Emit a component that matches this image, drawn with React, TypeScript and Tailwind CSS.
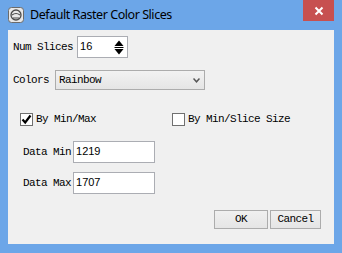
import React from "react";

const mono = "font-['Liberation_Mono',monospace] text-[11px] tracking-[-0.6px] text-black";

function TitleIcon() {
  return (
    <svg width="16" height="16" viewBox="0 0 16 16">
      <rect x="0.5" y="0.5" width="15" height="15" rx="3" fill="#e8e8e8" stroke="#6b6b6b" />
      <circle cx="8" cy="8" r="5" fill="none" stroke="#4a4a4a" strokeWidth="1.3" />
      <path d="M4 8 Q8 5 12 8" fill="none" stroke="#4a4a4a" strokeWidth="1.1" />
      <path d="M5 11 L11 11" stroke="#4a4a4a" strokeWidth="1" />
    </svg>
  );
}

function Spinner() {
  return (
    <svg width="10" height="15" viewBox="0 0 10 15">
      <path d="M5 0.5 L9.5 6 L0.5 6 Z" fill="#000" />
      <rect x="0.5" y="7" width="9" height="1" fill="#000" />
      <path d="M0.5 9 L9.5 9 L5 14.5 Z" fill="#000" />
    </svg>
  );
}

function Checkbox({ checked }: { checked?: boolean }) {
  return (
    <div className="w-[13px] h-[13px] border border-[#707070] bg-white flex items-center justify-center">
      {checked && (
        <svg width="11" height="11" viewBox="0 0 11 11">
          <path d="M1.5 5.5 L4.2 8.5 L9.5 1.5" fill="none" stroke="#000" strokeWidth="2.2" />
        </svg>
      )}
    </div>
  );
}

export default function App() {
  return (
    <div className="w-[342px] h-[253px] bg-[#6ca6e8] flex flex-col">
      <div className="h-[30px] flex items-start shrink-0">
        <div className="ml-[8px] mt-[7px]">
          <TitleIcon />
        </div>
        <span className="ml-[6px] mt-[5px] font-['Noto_Sans',sans-serif] text-[12.5px] tracking-[-0.45px] text-black leading-[20px]">
          Default Raster Color Slices
        </span>
        <div className="ml-auto mr-[8px] w-[31px] h-[21px] bg-[#c75050] flex items-center justify-center">
          <svg width="10" height="10" viewBox="0 0 10 10">
            <path d="M1.5 1.5 L8.5 8.5 M8.5 1.5 L1.5 8.5" stroke="#fff" strokeWidth="2" />
          </svg>
        </div>
      </div>
      <div className="mx-[8px] mb-[9px] flex-1 bg-[#f0f0f0] flex flex-col pl-[5px]">
        <div className="mt-[6px] flex items-center h-[22px]">
          <span className={mono}>Num Slices</span>
          <div className="ml-[4px] w-[51px] h-[22px] bg-white border border-[#abadb3] flex items-start">
            <span className="ml-[2px] mt-[2px] font-['Liberation_Sans',sans-serif] text-[11px] leading-[14px]">16</span>
            <div className="ml-auto mr-[3px] mt-[3px]">
              <Spinner />
            </div>
          </div>
        </div>
        <div className="mt-[12px] flex items-center h-[20px]">
          <span className={mono}>Colors</span>
          <div className="ml-[6px] w-[150px] h-[20px] bg-[linear-gradient(#f2f2f2,#e5e5e5)] border border-[#acacac] flex items-center">
            <span className={`${mono} ml-[3px]`}>Rainbow</span>
            <svg className="ml-auto mr-[4px]" width="7" height="5" viewBox="0 0 7 5">
              <path d="M0.5 0.5 L3.5 3.8 L6.5 0.5" fill="none" stroke="#555" strokeWidth="1.5" />
            </svg>
          </div>
        </div>
        <div className="mt-[23px] flex items-center h-[13px]">
          <div className="ml-[7px]">
            <Checkbox checked />
          </div>
          <span className={`${mono} ml-[3px]`}>By Min/Max</span>
          <div className="ml-[76px]">
            <Checkbox />
          </div>
          <span className={`${mono} ml-[3px]`}>By Min/Slice Size</span>
        </div>
        <div className="mt-[15px] flex items-center h-[22px] pl-[10px]">
          <span className={mono}>Data Min</span>
          <div className="ml-[2px] w-[82px] h-[22px] bg-white border border-[#abadb3] flex items-start">
            <span className="ml-[2px] mt-[2px] font-['Liberation_Sans',sans-serif] text-[11px] leading-[14px]">1219</span>
          </div>
        </div>
        <div className="mt-[9px] flex items-center h-[22px] pl-[10px]">
          <span className={mono}>Data Max</span>
          <div className="ml-[2px] w-[82px] h-[22px] bg-white border border-[#abadb3] flex items-start">
            <span className="ml-[2px] mt-[2px] font-['Liberation_Sans',sans-serif] text-[11px] leading-[14px]">1707</span>
          </div>
        </div>
        <div className="mt-[16px] flex justify-end gap-[2px] mr-[13px]">
          <div className="w-[54px] h-[19px] bg-[linear-gradient(#f0f0f0,#e5e5e5)] border border-[#acacac] flex items-center justify-center">
            <span className={mono}>OK</span>
          </div>
          <div className="w-[51px] h-[19px] bg-[linear-gradient(#f0f0f0,#e5e5e5)] border border-[#acacac] flex items-center justify-center">
            <span className={mono}>Cancel</span>
          </div>
        </div>
      </div>
    </div>
  );
}
